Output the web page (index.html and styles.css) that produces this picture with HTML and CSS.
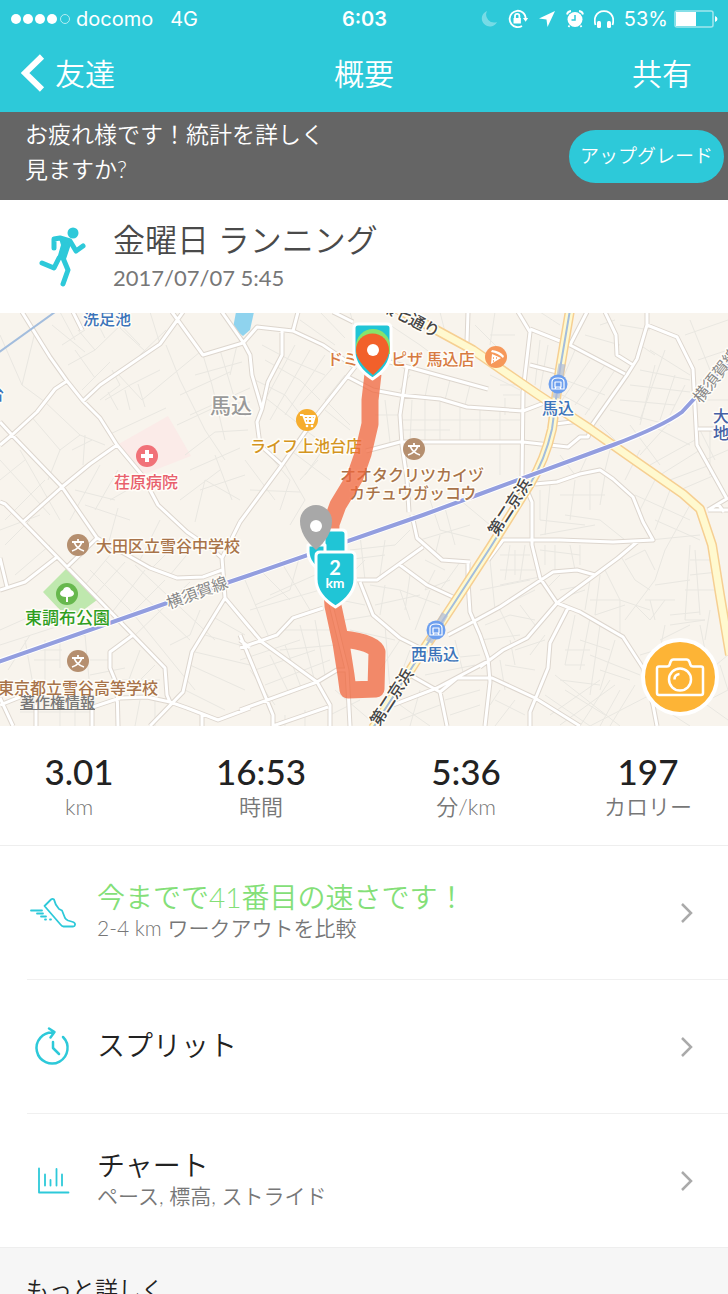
FILE: index.html
```
<!DOCTYPE html>
<html lang="ja">
<head>
    <meta charset="UTF-8">
    <meta name="viewport" content="width=device-width, initial-scale=1.0">
    <title>概要</title>
    <link rel="stylesheet" href="styles.css">
</head>
<body>
    <div class="app">
        <header class="header">
            <div class="status-bar">
                <div class="status-left">
                    <svg class="signal" width="60" height="12" viewBox="0 0 60 12">
                        <circle cx="5" cy="6" r="5"/>
                        <circle cx="17" cy="6" r="5"/>
                        <circle cx="29" cy="6" r="5"/>
                        <circle cx="41" cy="6" r="5"/>
                        <circle class="signal-off" cx="54" cy="6" r="4.5"/>
                    </svg>
                    <span>docomo</span>
                    <span class="network">4G</span>
                </div>
                <div class="clock">6:03</div>
                <div class="status-right">
                    <svg class="moon" width="18" height="18" viewBox="0 0 18 18"><path d="M7 1a8 8 0 1 0 10 11A8 8 0 0 1 7 1z"/></svg>
                    <svg width="20" height="20" viewBox="0 0 20 20">
                        <path class="line" d="M14.5 3.2A8.2 8.2 0 1 0 14 17M14.5 3.2A8 8 0 0 1 17.6 10"/>
                        <path d="M15 9h5.2l-2.6 3.8zM5.5 9h7.400v5.500H5.500z"/>
                        <path class="line" d="M7 9V7a2.200 2.200 0 0 1 4.400 0v2"/>
                    </svg>
                    <svg width="18" height="18" viewBox="0 0 18 18"><path d="M17 1L1 8.400l7.500 1L9.500 17z"/></svg>
                    <svg width="18" height="18" viewBox="0 0 18 18">
                        <circle cx="9" cy="9.500" r="7.500"/>
                        <path class="line" d="M1 4.500Q1.500 1.500 5 1M17 4.500Q16.500 1.500 13 1M3.500 15.500L2.500 17M14.500 15.500l1 1.500"/>
                        <path class="hands" d="M9 5v5H5.500"/>
                    </svg>
                    <svg width="20" height="19" viewBox="0 0 20 19">
                        <path class="line" d="M1.500 15Q0 10 1.500 6.500 4 1.200 10 1.200t8.500 5.300Q20 10 18.500 15"/>
                        <rect x="3" y="11" width="4" height="7" rx="1.500"/>
                        <rect x="13" y="11" width="4" height="7" rx="1.500"/>
                    </svg>
                    <span class="battery-text">53%</span>
                    <svg width="44" height="18" viewBox="0 0 44 18">
                        <rect class="battery-frame" x="1" y="1" width="38" height="16" rx="2"/>
                        <rect x="2" y="2" width="20" height="14"/>
                        <path d="M41 6q2.500 1 2.500 3T41 12z"/>
                    </svg>
                </div>
            </div>
            <nav class="nav">
                <a class="nav-back" href="#">
                    <svg width="24" height="38" viewBox="0 0 24 38"><path d="M21 2.500L4 19l17 16.500"/></svg>
                    <span>友達</span>
                </a>
                <h1>概要</h1>
                <a class="nav-share" href="#">共有</a>
            </nav>
        </header>

        <main class="content">
            <section class="banner">
                <p>お疲れ様です！統計を詳しく<br>見ますか?</p>
                <button type="button">アップグレード</button>
            </section>

            <section class="workout">
                <svg class="runner" width="48" height="60" viewBox="0 0 48 60">
                    <circle cx="34" cy="6" r="5.500"/>
                    <path class="body" d="M21 11l11 3-6 18h-7l4-14z"/>
                    <path class="limb" d="M15 21V12l6-1 10 3 6 10 7-5M20 31l-5 10-12-5M24 31l5 12-5 14"/>
                </svg>
                <div>
                    <h2>金曜日 ランニング</h2>
                    <time datetime="2017-07-07T05:45">2017/07/07 5:45</time>
                </div>
            </section>

            <section class="map">
                <svg class="map-canvas" viewBox="0 313 728 413">
                    <defs>
                        <path id="roads" d="M22 312L50 357 67 381 83 401 100 418 117 445 142 475 158 505 187 532 213 550 222 558 225 598 250 628
                            M83 401L100 385 160 344 178 319 183 312M172 312L203 355 243 343 257 327 293 331 323 345 355 367
                            M222 312L243 342 250 355 252 375 262 409 257 422 260 445 282 465M282 331V355L268 382 262 409
                            M298 312L293 331M333 312L353 322M240 522L282 465 317 415 355 367 M240 522L222 558
                            M348 377L373 390 400 395 440 399 467 407 523 411 552 400M407 367L400 415 402 445 407 479 409 512
                            M390 362L488 389M366 451L400 442H523L568 447 580 437H588L592 425 627 375 637 359 647 325V312
                            M468 312L467 342M518 312L530 332 523 392 522 479 532 502V545L540 578 557 603 580 612 623 637 643 668 653 705 657 726
                            M530 329L570 345 625 374M587 312L570 345M605 312L616 335 617 355 633 365M530 365L557 372M555 424L580 421
                            M647 325L677 337 693 369 697 445 727 499M698 429H728M708 510L728 498M708 510H728M718 504L724 512
                            M535 484L557 482 580 474 600 470 613 479 633 497 643 522 653 540 613 542 560 540H503L488 560
                            M637 542L618 558 595 575 557 603 527 638 503 650 480 667 M595 575L577 570 553 572 500 607 467 625 448 635
                            M568 608L550 643 548 668 530 712V726M457 678H492L535 698 580 726M468 562V582L470 612 480 635 488 658 490 682 485 726
                            M412 515L417 538 442 560 470 562M423 547L377 580H357M400 565L427 585 453 597M360 582L373 615 400 638 420 648
                            M323 608L293 618 277 635 240 648M225 598L262 642 317 682 330 705V726M240 635L273 715V726M240 710L317 682 337 670H347
                            M331 605L347 670 350 726M273 726L328 707M410 675L440 692 447 726M393 705L437 688 490 660M440 692L457 678
                            M0 422L12 435 62 487 97 538 150 568 177 578 203 577 222 570M0 445L12 435 37 412 55 389 67 381
                            M117 445L90 464 62 487 23 522M0 502L5 504 23 522 67 567 133 635 165 668 167 695 170 702M0 590L25 582 57 557M0 558L7 587M67 567L97 538
                            M133 635L110 652V668L117 685 118 726M225 598L192 652 183 692 150 726M0 705L20 697M93 707L120 698 147 697 170 702 187 708 218 720 250 708
                            M0 698L13 726M36 705V726M92 707V726M202 715V726M250 648L240 640M73 312L82 330"/>
                        <path id="highway" d="M390 305L440 332 473 350 537 394 590 429 637 462 683 494 700 509 705 524 712 545 720 595 730 655"/>
                        <path id="keihin" d="M570 310L560 369 552 429Q545 460 530 484L490 548 453 605 420 655 373 728"/>
                        <path id="railway" d="M-2 662L167 603 250 575 423 515 480 494 613 445Q663 426 682 412L728 362"/>
                    </defs>

                    <rect class="land" y="313" width="728" height="413"/>
                    <path class="hospital-area" d="M117 445L168 416 191 456 142 475z"/>
                    <path class="park" d="M43 592L66 569 97 600 78 614 60 610z"/>
                    <path class="water" d="M236 312L233 328 243 336 250 330 254 312z"/>

                    <path class="streets" d="M0 335L22 385M35 332L22 385 45 402M52 325L85 352M60 312L75 340M78 330L95 350 128 318M92 312L105 338M108 312L140 345M130 312L120 328 146 352M62 345L85 330M68 365L95 350M82 390L110 362M95 378L75 350M112 370L120 385 100 400M140 355L166 330M150 312L160 344
                        M118 374L142 400 200 352M105 400L130 385 160 370M118 410L108 392M130 410L125 390M145 407L138 384M108 435L166 408M166 345L180 380 205 430 225 460M180 395L230 372M190 415L250 388M177 425L220 405 250 402M203 355L212 385 225 440M220 350L235 400M237 345L230 375M195 375L242 362M185 455L215 432 248 430M190 470L240 448M215 455L232 500M200 490L245 475M180 500L220 470M195 522L205 480 240 500
                        M45 402L80 435 105 445M85 435L83 465M72 450L92 440M45 500L82 470M48 480L60 450 80 435M30 415L60 450M0 460L50 515M20 450L60 520M0 480L25 460M5 520L45 480M70 520L100 465M95 510L118 470M110 500L145 480M85 505L130 520M118 508L108 545M75 490L115 500
                        M0 530L40 515M5 545L30 520M15 575L50 545M110 555L85 585M125 562L95 595M145 570L110 615M165 580L120 625M190 582L130 640M90 570L130 610 195 690M105 560L190 640M135 565L215 640M180 540L150 570M195 545L170 575M160 520L140 560
                        M0 630L45 610M0 645L62 625M8 670L30 635M25 640L34 690M34 650H62M34 660H60M45 640V690M60 640V668M62 640L85 635 90 690M90 660H110M90 675L125 668M140 650L125 690M155 665L130 690M120 680H160M140 700L135 726M155 700V726M60 710V726M75 705V726M20 712H90M185 690L225 710M195 652L250 665M190 665L245 690M205 635L250 648M215 618L245 635M200 610L190 635 170 645
                        M262 345L290 360 325 375M265 360L300 380 320 400M255 380L285 395 305 420M262 395L300 425M295 345L265 400M310 350L270 420M325 355L285 415M335 365L300 405M345 375L325 400 350 425M325 410L350 430M305 430L340 455M290 450L330 480M265 450L290 480 280 510M245 460L275 500M250 490L300 492M285 465L305 500 290 525M318 460L300 480M330 440L305 475M300 320L335 345M320 312L345 338M350 312L355 330
                        M385 400L390 442M412 400L410 442M425 400V442M440 402V442M460 407V442M480 410V442M375 415H400M403 420H520M403 430H450M500 410V475M410 375L400 390M430 373L425 397M450 380L445 400M470 385L465 405M415 360L405 380M420 345L440 360M390 325L420 345M440 312L445 332M475 325L500 350M490 335L515 335M495 312L490 345M500 385H522M503 395H520M490 375L520 390M505 398V415
                        M540 340L535 385M548 345L540 390M575 350L560 385M590 360L562 400M605 365L575 405M615 370L585 415M565 380L605 395M562 395L590 410M540 312L560 325M585 335L620 345M600 325L615 320M620 325L650 330M640 345L655 355M665 350L640 420M650 350L690 375M640 370L690 380M630 385L690 392M620 400L675 405M610 410L670 425M655 365L640 425M675 375L660 420M685 385L670 415M690 400L640 455M630 425L660 465M650 425L690 445M600 425L620 445M590 450L580 472M610 450L605 470M560 455L575 475M640 450L625 480M650 465L695 440M660 475L700 450M670 480L710 465M680 490L715 475M655 480L640 510M670 490L655 530M690 505L665 550M635 495L690 520M655 520L700 540M650 540L700 535
                        M540 490V520M550 485L545 535M560 495H605M565 515L600 520 625 540M575 480L570 520M590 480V510M605 475L600 505M540 520L585 525M540 535L595 525M410 530L395 545 350 550M345 560L385 555M385 540L380 575M360 535L365 580M430 500L440 530 480 540M445 508L455 545M460 500L490 525M420 540L470 525M440 535L435 555
                        M370 585L400 590 410 620M385 585L380 615M375 605L420 595M400 590L440 605M410 575L405 610M430 590L415 630M435 570L425 590 450 580M460 562L440 590M445 570L425 560M340 600L365 605M345 620L375 615M350 630L395 640M385 625L390 690M400 640L380 670M410 650L395 690M260 570L290 600M280 560L310 610M300 555L290 590 255 605M245 580L270 640M250 610L320 590M270 595L315 575
                        M350 575L365 560M240 660L300 640M255 670L315 650M265 685L330 660M275 705L250 670M290 695L270 655M302 690L285 645M315 682L300 625M325 675L315 620M285 630L330 630M280 650L335 645M335 690L370 720M330 715L360 700M285 715V726M305 710V726
                        M490 560L495 610M510 545L505 580M515 550V575M525 545L520 580M500 555L530 555M500 570L535 570M540 550L580 555M545 545V565M555 545V570M570 545L575 570M580 545V565M480 590L530 580M500 585L550 575M515 600L535 590M545 590L560 575M560 590L585 585M520 605L535 625M500 610L515 640M480 640L520 635M485 625L510 615 535 620M570 595L585 590M590 580L585 610M600 575L595 615 625 605M590 600H620V635M605 570L620 600 650 610M620 555L635 580 650 590M625 560L645 550 655 570M665 550L655 580 640 600 625 620M655 585L690 580M645 600L675 600M690 545L685 620 705 620M695 550L700 615M690 560L715 560M690 575L718 572M685 590L718 590M665 600L650 620 635 605M650 600L655 620M670 615L700 612M670 625L705 620M660 640L690 625M640 655L690 640M660 650L650 665M665 625L660 650M700 625L705 650 700 670M710 610L705 640
                        M575 615L565 665M590 618L580 670M600 625L590 695M615 640L600 690M565 650H590M565 665L585 665M580 640L610 650M590 655L640 675M600 670L630 680M560 680L600 685M565 690L605 715M555 675L620 726M545 695L590 726M610 680L580 726M620 690L600 726M635 685L610 726M550 715L600 680M560 725L615 685M590 726L650 695M545 635L530 655M510 640L515 665M500 660L505 690M515 650L545 640M505 665L535 670M515 700L495 726M495 700L525 715M500 690L490 705M455 640L465 680M430 660L480 655M425 675L475 665M445 700L480 690M450 715L480 705M420 690L410 726M400 705L430 726M400 720L440 705M665 710L690 726M680 715L728 690M700 700L728 720M710 670L728 655M720 665L728 690M700 430L715 460M710 430V475M728 450L705 460M700 400H728M700 380H715M698 360L728 350M685 335L728 320M690 320L710 370"/>
                    <use class="road-edge" href="#roads"/>
                    <use class="road" href="#roads"/>
                    <use class="highway-edge" href="#highway"/>
                    <use class="highway-edge" href="#keihin"/>
                    <use class="highway" href="#highway"/>
                    <use class="highway" href="#keihin"/>
                    <use class="subway" href="#keihin"/>
                    <path class="subway" d="M-2 353L55 312"/>
                    <use class="railway-edge" href="#railway"/>
                    <use class="railway" href="#railway"/>
                    <path class="station-area" d="M562 364L556 398M445 614L429 642"/>

                    <g class="labels">
                        <text class="blue" x="83" y="325">洗足池</text>
                        <text class="blue" x="-12" y="400">台</text>
                        <text class="district" x="210" y="413">馬込</text>
                        <text class="red" x="114" y="488">荏原病院</text>
                        <text class="orange" x="327" y="365">ドミノ・ピザ 馬込店</text>
                        <text class="gold" x="250" y="452">ライフ上池台店</text>
                        <text class="brown" x="340" y="481">オオタクリツカイヅ</text>
                        <text class="brown" x="349" y="499">カチュウガッコウ</text>
                        <text class="blue" x="542" y="414">馬込</text>
                        <text class="navy" x="713" y="422">大</text>
                        <text class="navy" x="713" y="439">地</text>
                        <text class="brown" x="96" y="552">大田区立雪谷中学校</text>
                        <text class="green" x="25" y="624">東調布公園</text>
                        <text class="brown" x="-2" y="694">東京都立雪谷高等学校</text>
                        <text class="blue" x="411" y="660">西馬込</text>
                        <text class="gray" transform="translate(169 609) rotate(-20)">横須賀線</text>
                        <text class="gray" transform="translate(701 404) rotate(-52)">横須賀線</text>
                        <text class="dark" transform="translate(497 537) rotate(-57)">第二京浜</text>
                        <text class="dark" transform="translate(379 727) rotate(-57)">第二京浜</text>
                        <text class="dark" transform="translate(379 309) rotate(27)">環七通り</text>
                    </g>

                    <g class="pins">
                        <circle class="pin-red" cx="147" cy="456" r="11"/>
                        <path class="cross" d="M147 450v12M141 456h12"/>

                        <circle class="pin-gold" cx="307" cy="420" r="11"/>
                        <path class="glyph" d="M300 415h3l3 8h7l2-7h-11M304 419h10M308 416v6M312 416v6"/>
                        <circle class="dot" cx="307" cy="426" r="1.300"/>
                        <circle class="dot" cx="312" cy="426" r="1.300"/>

                        <circle class="pin-orange" cx="496" cy="357" r="11"/>
                        <path class="dot" d="M492 354l9 4-10 6zM492 350q8 1 12 6l-1 2q-5-5-12-6z"/>
                        <path class="pizza-spots" d="M493 358h1M496 358h1M493 361h1"/>

                        <g id="school">
                            <circle class="pin-brown" cx="414" cy="449" r="11"/>
                            <path class="glyph" d="M414 443v3M408 446h12M418 446q-3 7-10 9M410 446q3 7 10 9"/>
                        </g>
                        <use href="#school" x="-336" y="96"/>
                        <use href="#school" x="-336" y="212"/>

                        <g id="station">
                            <circle class="pin-blue" cx="558" cy="384" r="9.500"/>
                            <path class="glyph thin" d="M552 389v-7q0-4 6-4t6 4v7zM555 382h6v5h-6zM556 387l-1 2M560 387l1 2"/>
                        </g>
                        <use href="#station" x="-122" y="246"/>

                        <circle class="pin-green" cx="67" cy="594" r="11"/>
                        <path class="dot" d="M66 602v-5q-5 0-6-3 0-3 3-4 1-3 4-3t4 3q3 1 3 4-1 3-6 3v5z"/>
                    </g>

                    <path class="route" d="M373 374L370 400 370 424 363 454 355 477 338 505 331 524 330 560 333 606 341 643 346 675 348 690 376 689 377 652Q374 642 342 639"/>

                    <g class="markers">
                        <path class="shield" d="M324 530h18q4 0 4 4v25h-22z"/>
                        <path class="shield" d="M308 545h17v28q-17-8-17-22z"/>
                        <path class="pin-gray" d="M316 550Q300 536 300 521a16 16 0 0 1 32 0q0 15-16 29z"/>
                        <circle class="dot" cx="316" cy="526" r="6"/>
                        <path class="shield" d="M320 552h31q4 0 4 4v23q0 16-19.500 28-19.500-12-19.500-28v-23q0-4 4-4z"/>
                        <text class="km-number" x="335" y="575">2</text>
                        <text class="km-unit" x="335" y="588">km</text>

                        <path class="shield" d="M358 324h29q4 0 4 4v23q0 16-18.500 28-18.500-12-18.500-28v-23q0-4 4-4z"/>
                        <path class="pin-lime" d="M356 346a17 17 0 0 1 34 0v8h-34z"/>
                        <path class="pin-start" d="M373 375Q356 361 356 350a16.500 16.500 0 0 1 33 0q0 11-16 25z"/>
                        <circle class="dot" cx="373" cy="350" r="6"/>
                    </g>
                </svg>
                <a class="map-legal" href="#">著作権情報</a>
                <button class="camera" type="button" aria-label="写真を追加">
                    <svg width="48" height="40" viewBox="0 0 48 40">
                        <path d="M3 9.500h8q2 0 2.500-1.500l1-3q.800-2.500 3-2.500h13q2 0 3 2.500l1 3Q35 9.500 37 9.500h8q2 0 2 2V36q0 2-2 2H3q-2 0-2-2V11.500q0-2 2-2z"/>
                        <circle cx="24" cy="22.500" r="11"/>
                        <path d="M18.500 22.500q0-5 5-5.500"/>
                    </svg>
                </button>
            </section>

            <dl class="stats">
                <div><dt>km</dt><dd>3.01</dd></div>
                <div><dt>時間</dt><dd>16:53</dd></div>
                <div><dt>分/km</dt><dd>5:36</dd></div>
                <div><dt>カロリー</dt><dd>197</dd></div>
            </dl>

            <ul class="menu">
                <li>
                    <a href="#">
                        <svg class="menu-icon" width="48" height="40" viewBox="0 0 48 40">
                            <path d="M15.500 13L22 6.500q1.500-1.200 3 0 1 5 5 9.500l3 1.500 3 7.500q1 1.500 3 2.500l5 1.500q2.500 1 2 3-.200 1.500-2 1.500H34.500q-1.500 0-3-2z"/>
                            <path d="M2 17.500h11M8 20.500h6M12 23.500h5M16 26.500h1M21 26.500h1"/>
                        </svg>
                        <span class="menu-text">
                            <strong class="record">今までで41番目の速さです！</strong>
                            <small>2-4 km ワークアウトを比較</small>
                        </span>
                        <svg class="chevron" width="14" height="22" viewBox="0 0 14 22"><path d="M2 2l9 9-9 9"/></svg>
                    </a>
                </li>
                <li>
                    <a href="#">
                        <svg class="menu-icon bold" width="48" height="40" viewBox="0 0 48 40">
                            <path d="M34 10a15.500 15.500 0 1 1-10-4.500M20 1.500l5.500 3.500-4 5.500M24 15v6l6 6"/>
                        </svg>
                        <span class="menu-text"><strong>スプリット</strong></span>
                        <svg class="chevron" width="14" height="22" viewBox="0 0 14 22"><path d="M2 2l9 9-9 9"/></svg>
                    </a>
                </li>
                <li>
                    <a href="#">
                        <svg class="menu-icon" width="48" height="40" viewBox="0 0 48 40">
                            <path d="M10 7.500v24h29.500M16 13.500v11M21.500 19v5.500M27.500 8v16.500M33 13.500v11"/>
                        </svg>
                        <span class="menu-text">
                            <strong>チャート</strong>
                            <small>ペース, 標高, ストライド</small>
                        </span>
                        <svg class="chevron" width="14" height="22" viewBox="0 0 14 22"><path d="M2 2l9 9-9 9"/></svg>
                    </a>
                </li>
            </ul>

            <section class="more">
                <h3>もっと詳しく</h3>
            </section>
        </main>
    </div>
</body>
</html>
```
FILE: styles.css
```
* {
    box-sizing: border-box;
}

body {
    margin: 0;
    font-family: Lato, "Noto Sans CJK JP", sans-serif;
    font-weight: 350;
    color: #222;
    background: #fff;
}

h1, h2, h3, p, dl, dd, ul {
    margin: 0;
    padding: 0;
    font-weight: 350;
}

a {
    color: inherit;
    text-decoration: none;
}

button {
    border: none;
    padding: 0;
    cursor: pointer;
    font-family: inherit;
}

svg {
    flex: none;
}

.app {
    display: flex;
    flex-direction: column;
    height: 100vh;
}

.content {
    flex: 1;
    overflow-y: auto;
    scrollbar-width: none;
}

/* header */
.header {
    background: #2dc9d9;
    color: #fff;
}

.status-bar {
    display: grid;
    grid-template-columns: 1fr auto 1fr;
    align-items: center;
    height: 38px;
    padding: 0 10px 0 11px;
    font-family: Inter, sans-serif;
    font-size: 20px;
    font-weight: 400;
}

.status-bar svg {
    fill: #fff;
}

.status-bar .line {
    fill: none;
    stroke: #fff;
    stroke-width: 1.8;
}

.status-left, .status-right {
    display: flex;
    align-items: center;
}

.status-left {
    gap: 5px;
}

.status-right {
    justify-content: flex-end;
    gap: 10px;
}

.status-bar .signal-off {
    fill: none;
    stroke: #b5edf2;
}

.network {
    margin-left: 12px;
}

.clock {
    font-weight: 600;
}

.moon {
    opacity: 0.35;
}

.hands {
    fill: none;
    stroke: #2dc9d9;
    stroke-width: 1.5;
}

.battery-text {
    margin-right: -4px;
}

.status-bar .battery-frame {
    fill: none;
    stroke: #a3e6ed;
    stroke-width: 1.5;
}

.nav {
    display: grid;
    grid-template-columns: 1fr auto 1fr;
    align-items: center;
    height: 74px;
    padding: 0 36px 4px 21px;
    font-size: 30px;
    line-height: 40px;
}

.nav h1 {
    font-size: 30px;
    padding-left: 15px;
}

.nav-back {
    display: flex;
    align-items: center;
    gap: 10px;
}

.nav-back svg {
    fill: none;
    stroke: #fff;
    stroke-width: 6;
}

.nav-share {
    text-align: right;
}

/* upgrade banner */
.banner {
    display: flex;
    align-items: center;
    justify-content: space-between;
    padding: 5px 4px 13px 25px;
    background: #656565;
    color: #fff;
    font-size: 23px;
    line-height: 35px;
}

.banner button {
    width: 155px;
    height: 53px;
    margin-top: 8px;
    padding-bottom: 4px;
    border-radius: 27px;
    background: #2dc9d9;
    color: #fff;
    font-size: 19px;
    font-weight: 350;
}

/* workout title */
.workout {
    display: flex;
    align-items: center;
    gap: 26px;
    padding: 19px 39px;
}

.runner {
    fill: #2dc9d9;
}

.runner .limb {
    fill: none;
    stroke: #2dc9d9;
    stroke-width: 5;
    stroke-linecap: round;
    stroke-linejoin: round;
}

.runner .body {
    stroke: #2dc9d9;
    stroke-width: 2;
    stroke-linejoin: round;
}

.workout h2 {
    font-size: 32px;
    line-height: 42px;
    color: #4a4a4a;
}

.workout time {
    display: block;
    font-size: 22px;
    font-weight: 400;
    line-height: 33px;
    color: #777;
}

/* map */
.map {
    position: relative;
}

.map-canvas {
    display: block;
    width: 100%;
    height: auto;
}

.map-canvas path, .map-canvas use {
    stroke-linejoin: round;
}

.land { fill: #f8f4ed; }
.hospital-area { fill: #fbebe8; }
.park { fill: #bfe8ae; }
.water { fill: #8fd3ee; }

.streets {
    fill: none;
    stroke: #e9e7e1;
}

.road-edge, .road, .highway-edge, .highway, .subway, .railway-edge, .railway, .station-area {
    fill: none;
}

.road-edge { stroke: #ddd6ce; stroke-width: 5; }
.road { stroke: #fff; stroke-width: 3; }
.highway-edge { stroke: #f6cf92; stroke-width: 10; }
.highway { stroke: #fff9cf; stroke-width: 7; }
.subway { stroke: #a3bddd; stroke-width: 2; }
.railway-edge { stroke: #fff; stroke-width: 6; }
.railway { stroke: #939edf; stroke-width: 4; }
.station-area { stroke: #aebbd8; stroke-width: 7; opacity: 0.7; }

.labels text {
    font-family: "Noto Sans CJK JP", sans-serif;
    font-size: 16px;
    font-weight: 500;
    stroke: #fffdf8;
    stroke-width: 3;
    stroke-linejoin: round;
    paint-order: stroke;
}

.labels .blue { fill: #3c74ba; }
.labels .navy { fill: #4560a5; }
.labels .red { fill: #e8606c; }
.labels .orange { fill: #d77b42; }
.labels .gold { fill: #d4951f; }
.labels .brown { fill: #a87349; }
.labels .green { fill: #2f9e1e; font-size: 17px; }
.labels .gray { fill: #888; font-weight: 400; }
.labels .dark { fill: #444; }
.labels .district { fill: #999; font-size: 21px; }

.pin-red { fill: #f17178; }
.pin-gold { fill: #f6ad2e; }
.pin-orange { fill: #f6985a; }
.pin-brown { fill: #b58f6f; }
.pin-blue { fill: #6d9fee; }
.pin-green { fill: #67b84d; }
.dot { fill: #fff; }

.glyph {
    fill: none;
    stroke: #fff;
    stroke-width: 1.8;
}

.glyph.thin {
    stroke-width: 1.2;
}

.cross {
    stroke: #fff;
    stroke-width: 4;
}

.pizza-spots {
    stroke: #f6985a;
    stroke-width: 1.5;
}

.route {
    fill: none;
    stroke: #f0653c;
    stroke-width: 17;
    opacity: 0.75;
}

.shield {
    fill: #20c5d6;
    stroke: #fff;
    stroke-width: 3;
}

.pin-gray { fill: #a8a8a8; }
.pin-lime { fill: #86e36c; }
.pin-start { fill: #f2602a; }

.markers text {
    fill: #fff;
    font-weight: 700;
    text-anchor: middle;
}

.km-number { font-size: 20px; }
.km-unit { font-size: 14px; }

.map-legal {
    position: absolute;
    left: 20px;
    bottom: 14px;
    font-size: 15px;
    font-weight: 500;
    line-height: 20px;
    color: #777;
    text-decoration: underline;
}

.camera {
    position: absolute;
    right: 9px;
    bottom: 10px;
    display: flex;
    align-items: center;
    justify-content: center;
    width: 78px;
    height: 78px;
    border: 4px solid #fff;
    border-radius: 50%;
    background: #fdb436;
}

.camera svg {
    fill: none;
    stroke: #fff;
    stroke-width: 2.5;
    overflow: visible;
}

/* totals */
.stats {
    display: grid;
    grid-template-columns: 79fr 103fr 102fr 80fr;
    padding: 24px 0 23px;
    border-bottom: 1px solid #eee;
    text-align: center;
}

.stats div {
    display: flex;
    flex-direction: column-reverse;
}

.stats dd {
    font-size: 35px;
    font-weight: 500;
    line-height: 42px;
}

.stats dt {
    font-size: 22px;
    line-height: 30px;
    color: #777;
}

/* menu rows */
.menu {
    list-style: none;
}

.menu li + li {
    margin-left: 27px;
    border-top: 1px solid #f0f0f0;
}

.menu li + li a {
    padding-left: 2px;
}

.menu a {
    display: flex;
    align-items: center;
    gap: 20px;
    height: 133px;
    padding: 0 34px 0 29px;
}

.menu-icon {
    fill: none;
    stroke: #2dc9d9;
    stroke-width: 1.8;
    stroke-linecap: round;
    stroke-linejoin: round;
    overflow: visible;
}

.menu-icon.bold {
    stroke-width: 2.5;
}

.menu-text {
    flex: 1;
    padding-bottom: 4px;
}

.menu-text strong {
    display: block;
    font-size: 28px;
    font-weight: 350;
    line-height: 34px;
}

.menu-text .record {
    color: #84df78;
}

.menu-text small {
    display: block;
    font-size: 21px;
    line-height: 27px;
    color: #777;
}

.chevron {
    fill: none;
    stroke: #aaa;
    stroke-width: 2.5;
}

.more {
    padding: 24px 26px;
    border-top: 1px solid #eee;
    background: #f6f6f6;
}

.more h3 {
    font-size: 23px;
    line-height: 34px;
}
```
